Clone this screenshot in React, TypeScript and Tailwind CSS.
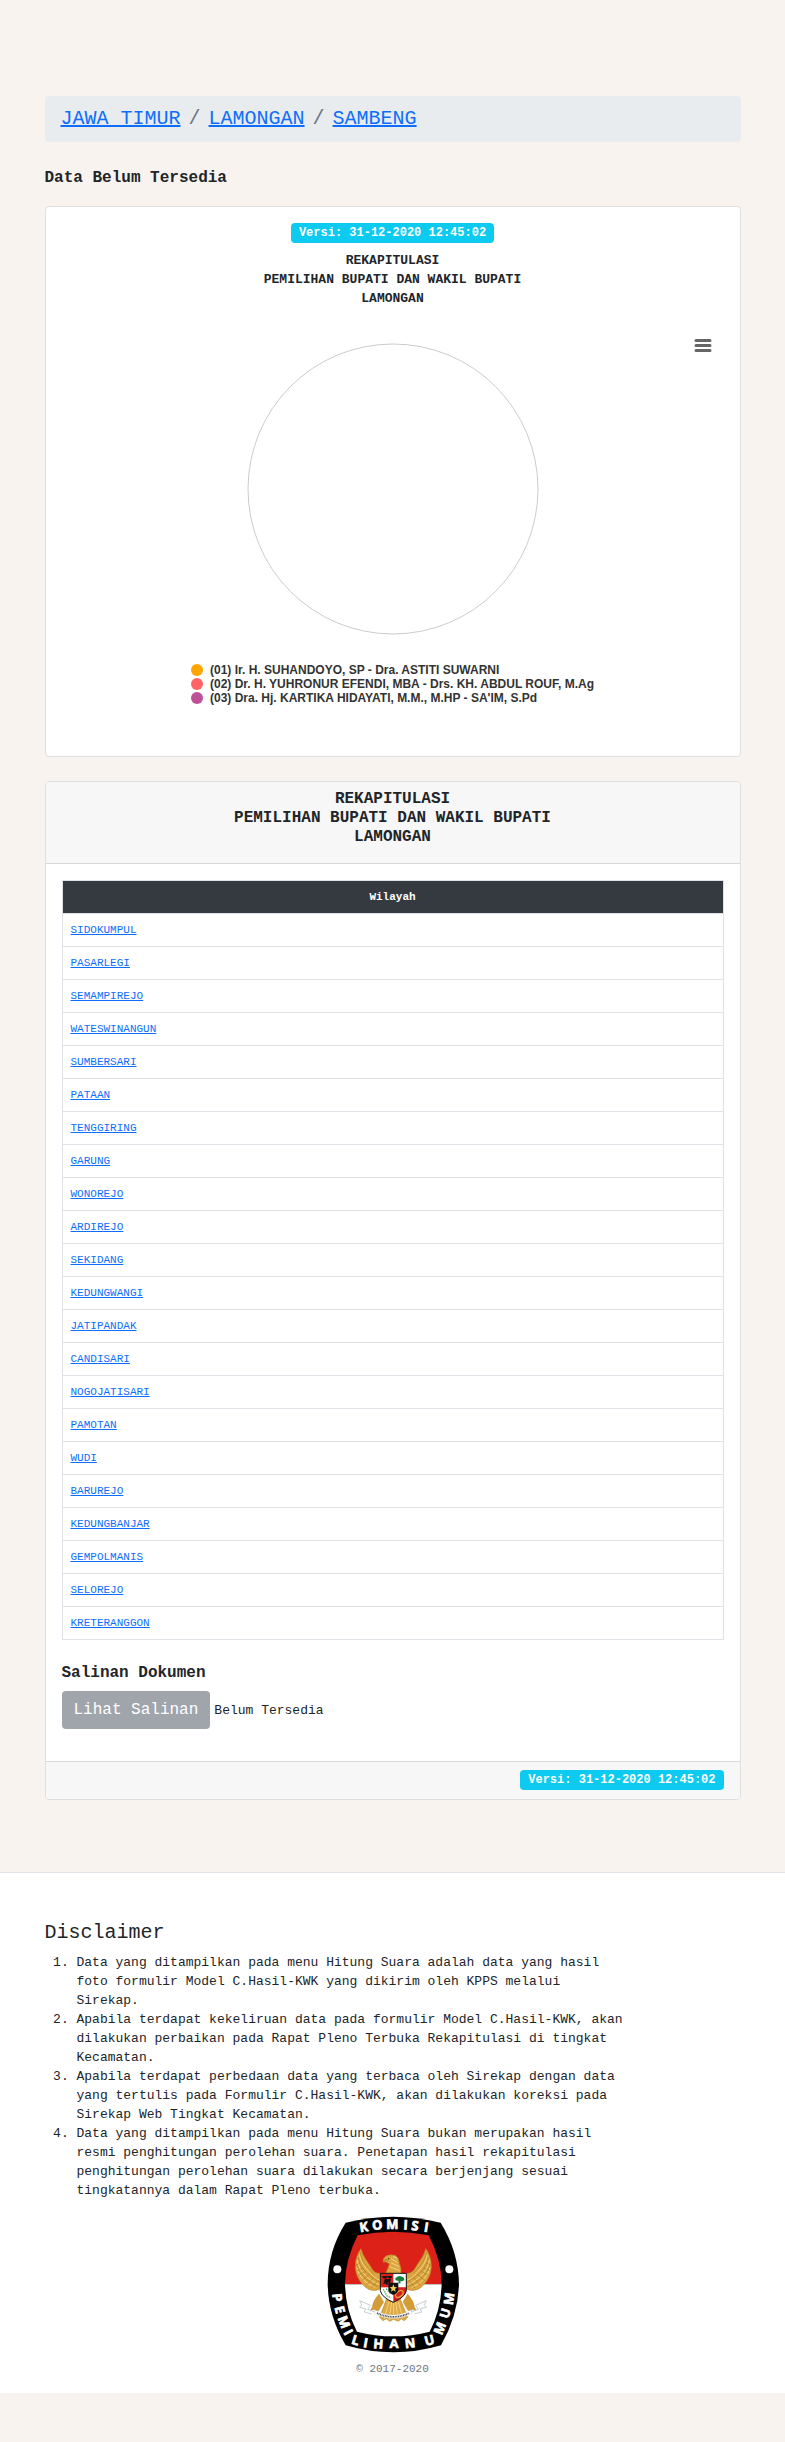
import React from "react";

const villages = [
  "SIDOKUMPUL", "PASARLEGI", "SEMAMPIREJO", "WATESWINANGUN", "SUMBERSARI", "PATAAN",
  "TENGGIRING", "GARUNG", "WONOREJO", "ARDIREJO", "SEKIDANG", "KEDUNGWANGI",
  "JATIPANDAK", "CANDISARI", "NOGOJATISARI", "PAMOTAN", "WUDI", "BARUREJO",
  "KEDUNGBANJAR", "GEMPOLMANIS", "SELOREJO", "KRETERANGGON",
];

const candidates = [
  { dot: "bg-[#ffa500]", name: "(01) Ir. H. SUHANDOYO, SP - Dra. ASTITI SUWARNI" },
  { dot: "bg-[#ff6363]", name: "(02) Dr. H. YUHRONUR EFENDI, MBA - Drs. KH. ABDUL ROUF, M.Ag" },
  { dot: "bg-[#bd5096]", name: "(03) Dra. Hj. KARTIKA HIDAYATI, M.M., M.HP - SA'IM, S.Pd" },
];

const notes = [
  "Data yang ditampilkan pada menu Hitung Suara adalah data yang hasil foto formulir Model C.Hasil-KWK yang dikirim oleh KPPS melalui Sirekap.",
  "Apabila terdapat kekeliruan data pada formulir Model C.Hasil-KWK, akan dilakukan perbaikan pada Rapat Pleno Terbuka Rekapitulasi di tingkat Kecamatan.",
  "Apabila terdapat perbedaan data yang terbaca oleh Sirekap dengan data yang tertulis pada Formulir C.Hasil-KWK, akan dilakukan koreksi pada Sirekap Web Tingkat Kecamatan.",
  "Data yang ditampilkan pada menu Hitung Suara bukan merupakan hasil resmi penghitungan perolehan suara. Penetapan hasil rekapitulasi penghitungan perolehan suara dilakukan secara berjenjang sesuai tingkatannya dalam Rapat Pleno terbuka.",
];

const crumbs = ["JAWA TIMUR", "LAMONGAN", "SAMBENG"];

// Emblem lettering: glyph, centre x, centre y, rotation in degrees
const letters: [string, number, number, number][] = [
  ["K", 160, 83, -9], ["O", 201, 77, -5], ["M", 246, 75, -1], ["I", 286, 76, 3], ["S", 314, 79, 6], ["I", 348, 84, 9],
  ["P", 81, 295, 84], ["E", 89, 331, 76], ["M", 101, 368, 69], ["I", 114, 399, 62], ["L", 136, 422, 17],
  ["I", 166, 430, 10], ["H", 204, 433, 5], ["A", 251, 433, 0], ["N", 299, 431, -6],
  ["U", 357, 423, -14], ["M", 388, 387, -68], ["U", 404, 342, -74], ["M", 416, 298, -82],
];

function Badge() {
  return (
    <span className="inline-block h-5 rounded bg-[#0dcaf0] px-2 py-1 text-xs leading-3 font-bold text-white">
      Versi: 31-12-2020 12:45:02
    </span>
  );
}

function Title() {
  return (
    <>
      REKAPITULASI
      <br />
      PEMILIHAN BUPATI DAN WAKIL BUPATI
      <br />
      LAMONGAN
    </>
  );
}

function Wing() {
  return (
    <g>
      <path
        d="M152 148C143 160 135 178 135 200C135 226 148 252 172 268C190 278 208 272 216 262L216 222C202 224 190 220 182 204C174 188 158 174 152 148Z"
        fill="#dba63f"
        stroke="#b9832a"
        strokeWidth="2"
      />
      <g fill="none" stroke="#f5d583" strokeWidth="3">
        <path d="M148 166C150 188 164 204 180 222S202 240 214 244" />
        <path d="M141 182C144 208 162 230 184 244S204 254 212 256" />
        <path d="M139 204C146 232 168 254 194 264" />
      </g>
      <g fill="none" stroke="#b17b25" strokeWidth="2">
        <path d="M150 158C152 184 172 206 190 222" />
        <path d="M144 174C146 200 168 226 208 248" />
        <path d="M139 194C144 220 168 246 204 262" />
        <path d="M140 214L158 206M144 228L166 216M154 244L176 226M168 258L188 236M184 266L200 246M138 198L150 190" />
      </g>
    </g>
  );
}

function Emblem() {
  return (
    <svg viewBox="50 50 396 411" className="h-[137px] w-[132px] overflow-visible" role="img" aria-label="Komisi Pemilihan Umum">
      <path d="M106 70Q248 34 391 70Q446 160 446 258Q442 350 392 438Q250 480 106 438Q54 350 52 255Q52 155 106 70Z" fill="#000" />
      <path d="M142 108Q248 86 355 108Q393 180 394 255H104Q105 180 142 108Z" fill="#dc2118" />
      <path d="M104 255H394Q392 332 358 397Q250 425 140 397Q106 332 104 255Z" fill="#fff" />
      <circle cx="81" cy="210" r="12" fill="#fff" />
      <circle cx="417" cy="210" r="12" fill="#fff" />
      {letters.map(([glyph, x, y, angle], i) => (
        <text
          key={i}
          transform={`translate(${x} ${y}) rotate(${angle})`}
          y="14"
          textAnchor="middle"
          fill="#fff"
          stroke="#fff"
          strokeWidth="2"
          fontSize="39"
          fontWeight="700"
          fontFamily="'Open Sans', sans-serif"
        >
          {glyph}
        </text>
      ))}
      <Wing />
      <g transform="matrix(-1 0 0 1 498 0)">
        <Wing />
      </g>
      {/* tail */}
      <path d="M228 300H270L292 354L282 364L272 358L264 366L250 360L238 366L228 358L218 364L208 354Z" fill="#dda940" stroke="#bb8930" strokeWidth="2" />
      <path d="M236 308L222 358M244 308L236 362M250 308V358M256 308L264 362M264 308L278 358" fill="none" stroke="#f4d384" strokeWidth="3" />
      {/* legs */}
      <path d="M206 284Q188 304 186 322L180 334L192 330L198 338L206 332L220 308Z" fill="#d49c35" stroke="#b17b25" />
      <path d="M292 284Q310 304 312 322L318 334L306 330L300 338L292 332L278 308Z" fill="#d49c35" stroke="#b17b25" />
      {/* head */}
      <path d="M219 190Q216 178 226 171Q238 164 254 168Q266 174 267 192Q274 206 272 222H226Q234 206 237 194Q230 188 225 187Z" fill="#dba63f" stroke="#b9832a" strokeWidth="2" />
      <path d="M242 178L262 190M242 190L266 202M238 202L268 214M248 172L260 176" stroke="#f5d583" strokeWidth="3" fill="none" />
      <path d="M219 190L226 180L234 184" stroke="#8c5a18" strokeWidth="2" fill="none" />
      <circle cx="235" cy="178" r="2" fill="#3a2408" />
      {/* ribbon */}
      <path d="M194 332Q248 362 302 332L304 343Q248 372 192 343Z" fill="#fff" stroke="#b8b8b8" />
      <path d="M200 341Q248 364 297 341" fill="none" stroke="#444" strokeWidth="5" strokeDasharray="3 2" />
      <path d="M194 338L172 330L180 318L148 304L154 316L148 324L166 328L162 338L184 344" fill="#fff" stroke="#a8b7bd" strokeWidth="2" />
      <path d="M302 338L324 330L316 318L348 304L342 316L348 324L330 328L334 338L312 344" fill="#fff" stroke="#a8b7bd" strokeWidth="2" />
      {/* shield */}
      <path d="M210 222H288V274Q284 294 249 309Q214 294 210 274Z" fill="#fff" />
      <path d="M210 222H249V264H210Z" fill="#d91e1e" />
      <path d="M249 264H288V274Q284 294 249 309Z" fill="#d91e1e" />
      <path d="M210 222H288V274Q284 294 249 309Q214 294 210 274Z" fill="none" stroke="#111" strokeWidth="3" />
      <path d="M215 231Q218 238 226 237L231 232L238 237Q244 238 244 230M224 240H240L238 252L233 246L230 256L225 250L220 254Z" fill="#111" stroke="#111" strokeWidth="2" />
      <path d="M267 230Q283 232 282 242Q274 248 270 244L271 252H264L265 244Q256 246 254 239Q258 231 267 230Z" fill="#15803d" />
      <ellipse cx="267" cy="284" rx="13" ry="8" transform="rotate(-38 267 284)" fill="none" stroke="#e1a934" strokeWidth="4" />
      <path d="M219 270L230 290L242 296M228 268L240 284" fill="none" stroke="#4b9b52" strokeWidth="4" strokeDasharray="4 3" />
      <path d="M234 250H264V272Q262 282 249 287Q236 282 234 272Z" fill="#111" />
      <path d="M249 255L252 263L260 264L254 269L256 277L249 273L242 277L244 269L238 264L246 263Z" fill="#f6cf5b" />
    </svg>
  );
}

export default function App() {
  return (
    <div className="min-h-screen bg-[#f8f3ee] font-['Liberation_Mono',monospace] text-[13px] leading-[19px] text-[#212529]">
      <main className="mx-auto max-w-[720px] px-3 pt-24 pb-[72px]">
        <nav aria-label="breadcrumb" className="rounded bg-[#e9ecef] px-4 py-2">
          <ol className="flex flex-wrap text-xl leading-[30px]">
            {crumbs.map((name, i) => (
              <li key={name} className="flex">
                {i > 0 && <span className="px-2 text-[#6c757d]">/</span>}
                <a href="#" className="text-[#0d6efd] underline">{name}</a>
              </li>
            ))}
          </ol>
        </nav>

        <h1 className="mt-[27px] mb-[18px] text-base leading-[19px] font-bold">Data Belum Tersedia</h1>

        <section className="rounded border border-[#dfdfdf] bg-white p-4 pb-[51px]">
          <div className="flex justify-center">
            <Badge />
          </div>
          <h2 className="mt-2 text-center font-bold">
            <Title />
          </h2>
          <div className="relative mt-[23px] pt-3">
            <button type="button" aria-label="Chart menu" className="absolute top-0 right-[7px] flex size-7 items-center justify-center">
              <svg viewBox="0 0 18 14" className="h-[14px] w-[18px]" stroke="#666" strokeWidth="3" strokeLinecap="round">
                <path d="M2 2.5H16M2 7.5H16M2 12.5H16" />
              </svg>
            </button>
            <svg viewBox="0 0 292 292" className="mx-auto block size-[292px]">
              <circle cx="146" cy="146" r="145" fill="none" stroke="#ccc" />
            </svg>
            <ul className="mx-auto mt-7 w-fit font-['Liberation_Sans',sans-serif] text-xs leading-[14px] font-bold text-[#333]">
              {candidates.map((c) => (
                <li key={c.name} className="flex items-center gap-[7px]">
                  <span className={`size-3 rounded-full ${c.dot}`} />
                  {c.name}
                </li>
              ))}
            </ul>
          </div>
        </section>

        <section className="mt-6 overflow-hidden rounded border border-[#dfdfdf] bg-white">
          <h2 className="border-b border-[#d8d8d8] bg-[#f7f7f7] px-4 pt-2 pb-4 text-center text-base leading-[19px] font-bold">
            <Title />
          </h2>
          <div className="px-4 pt-4 pb-8">
            <table className="w-full border-collapse border border-[#dee2e6] text-[11px] leading-4">
              <thead>
                <tr>
                  <th className="h-[33px] border border-[#dee2e6] bg-[#343a40] px-2 text-center font-bold text-white">Wilayah</th>
                </tr>
              </thead>
              <tbody>
                {villages.map((name) => (
                  <tr key={name}>
                    <td className="h-[33px] border border-[#dee2e6] px-2">
                      <a href="#" className="text-[#0d6efd] underline">{name}</a>
                    </td>
                  </tr>
                ))}
              </tbody>
            </table>
            <h3 className="mt-6 mb-2 text-base leading-[19px] font-bold">Salinan Dokumen</h3>
            <div className="flex items-center gap-1">
              <button type="button" disabled className="rounded bg-[#a0a4ab] px-3 py-[7px] text-base leading-6 text-white">
                Lihat Salinan
              </button>
              <span>Belum Tersedia</span>
            </div>
          </div>
          <div className="flex justify-end border-t border-[#d8d8d8] bg-[#f7f7f7] px-4 pt-2 pb-[9px]">
            <Badge />
          </div>
        </section>
      </main>

      <footer className="border-t border-[#dee2e6] bg-white">
        <div className="mx-auto max-w-[720px] px-3 pt-12 pb-4">
          <h2 className="mb-2 text-xl leading-6">Disclaimer</h2>
          <ol className="max-w-[582px] list-decimal pl-8">
            {notes.map((note) => (
              <li key={note}>{note}</li>
            ))}
          </ol>
          <div className="mt-4 flex flex-col items-center gap-2">
            <Emblem />
            <small className="text-[11px] leading-4 text-[#6c757d]">© 2017-2020</small>
          </div>
        </div>
      </footer>
    </div>
  );
}
